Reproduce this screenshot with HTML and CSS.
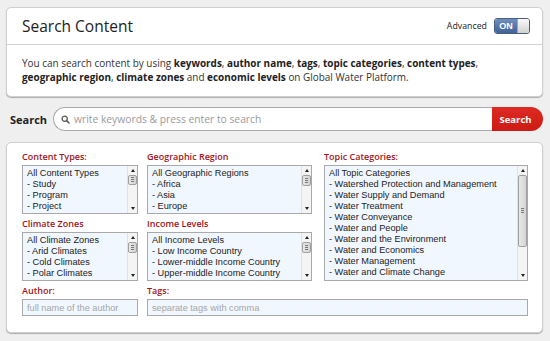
FILE: index.html
```html
<!DOCTYPE html>
<html>
<head>
<meta charset="utf-8">
<link rel="stylesheet" href="styles.css">
</head>
<body>
<div class="page">
  <section class="card intro">
    <header class="intro-head">
      <h1 class="title">Search Content</h1>
      <div class="adv">
        <span class="adv-label">Advanced</span>
        <span class="toggle"><span class="toggle-on">ON</span><span class="toggle-knob"></span></span>
      </div>
    </header>
    <p class="desc">You can search content by using <b>keywords</b>, <b>author name</b>, <b>tags</b>, <b>topic categories</b>, <b>content types</b>,<br><b>geographic region</b>, <b>climate zones</b> and <b>economic levels</b> on Global Water Platform.</p>
  </section>

  <div class="searchbar">
    <span class="search-label">Search</span>
    <div class="search-field">
      <svg class="search-icon" width="9" height="9" viewBox="0 0 9 9"><circle cx="3.7" cy="3.7" r="2.6" fill="none" stroke="#555" stroke-width="1.3"/><line x1="5.6" y1="5.6" x2="8" y2="8" stroke="#555" stroke-width="1.5" stroke-linecap="round"/></svg>
      <input class="search-input" type="text" placeholder="write keywords &amp; press enter to search">
    </div>
    <button class="search-btn">Search</button>
  </div>

  <section class="card filters">
    <div class="field f-types">
      <div class="flabel">Content Types:</div>
      <div class="list">
        <div class="items">
          <div>All Content Types</div><div>- Study</div><div>- Program</div><div>- Project</div>
        </div>
        <div class="sb"><span class="arr up"></span><span class="track"><span class="thumb thumb-s"></span></span><span class="arr down"></span></div>
      </div>
    </div>
    <div class="field f-geo">
      <div class="flabel">Geographic Region</div>
      <div class="list">
        <div class="items">
          <div>All Geographic Regions</div><div>- Africa</div><div>- Asia</div><div>- Europe</div>
        </div>
        <div class="sb"><span class="arr up"></span><span class="track"><span class="thumb thumb-m"></span></span><span class="arr down"></span></div>
      </div>
    </div>
    <div class="field f-topic">
      <div class="flabel">Topic Categories:</div>
      <div class="list list-tall">
        <div class="items">
          <div>All Topic Categories</div>
          <div>- Watershed Protection and Management</div>
          <div>- Water Supply and Demand</div>
          <div>- Water Treatment</div>
          <div>- Water Conveyance</div>
          <div>- Water and People</div>
          <div>- Water and the Environment</div>
          <div>- Water and Economics</div>
          <div>- Water Management</div>
          <div>- Water and Climate Change</div>
        </div>
        <div class="sb"><span class="arr up"></span><span class="track"><span class="thumb thumb-l"></span></span><span class="arr down"></span></div>
      </div>
    </div>
    <div class="field f-climate">
      <div class="flabel">Climate Zones</div>
      <div class="list">
        <div class="items">
          <div>All Climate Zones</div><div>- Arid Climates</div><div>- Cold Climates</div><div>- Polar Climates</div>
        </div>
        <div class="sb"><span class="arr up"></span><span class="track"><span class="thumb thumb-m"></span></span><span class="arr down"></span></div>
      </div>
    </div>
    <div class="field f-income">
      <div class="flabel">Income Levels</div>
      <div class="list">
        <div class="items">
          <div>All Income Levels</div><div>- Low Income Country</div><div>- Lower-middle Income Country</div><div>- Upper-middle Income Country</div>
        </div>
        <div class="sb"><span class="arr up"></span><span class="track"><span class="thumb thumb-m"></span></span><span class="arr down"></span></div>
      </div>
    </div>
    <div class="field f-author">
      <div class="flabel">Author:</div>
      <input class="tinput" type="text" placeholder="full name of the author">
    </div>
    <div class="field f-tags">
      <div class="flabel">Tags:</div>
      <input class="tinput" type="text" placeholder="separate tags with comma">
    </div>
  </section>
</div>
</body>
</html>
```

FILE: styles.css
```css
* { box-sizing: border-box; }
html, body { margin: 0; padding: 0; }
body {
  background: #efefef;
  font-family: "Open Sans", "DejaVu Sans", sans-serif;
  color: #333;
  width: 550px;
  height: 341px;
  overflow: hidden;
}
.page {
  padding: 7px 7px 0 6px;
}
.card {
  background: #fff;
  border: 1px solid #cfcfcf;
  border-radius: 5px;
  box-shadow: 0 1px 1px rgba(0,0,0,0.28);
}
.intro-head {
  height: 37px;
  border-bottom: 1px solid #d2d2d2;
  display: flex;
  align-items: center;
  justify-content: space-between;
  padding: 0 12px 0 15px;
}
.title {
  margin: 0;
  font-size: 15.5px;
  font-weight: 400;
  color: #222;
}
.adv {
  display: flex;
  align-items: center;
  gap: 7px;
}
.adv-label {
  font-size: 8.8px;
  color: #222;
}
.toggle {
  display: flex;
  width: 36px;
  height: 16px;
  border: 1px solid #4a5f80;
  border-radius: 3px;
  overflow: hidden;
}
.toggle-on {
  flex: 1;
  background: linear-gradient(#6f8fc0, #3f6298);
  color: #fff;
  font-size: 9px;
  font-weight: 700;
  line-height: 14px;
  text-align: center;
  font-family: "Liberation Sans", Arial, sans-serif;
}
.toggle-knob {
  width: 12px;
  background: linear-gradient(#fafafa, #d0d0d0);
  border-left: 1px solid #9aa;
}
.desc {
  margin: 0;
  padding: 11px 15px 12px;
  font-size: 9.95px;
  line-height: 14px;
  color: #333;
}
.desc b { color: #222; font-weight: 700; }

.searchbar {
  display: flex;
  align-items: center;
  margin: 10px 0 11px 4px;
  height: 24px;
}
.search-label {
  font-size: 11px;
  font-weight: 700;
  color: #222;
  width: 43px;
}
.search-field {
  flex: 1;
  height: 24px;
  display: flex;
  align-items: center;
  border: 1px solid #aaa;
  border-right: none;
  border-radius: 12px 0 0 12px;
  background: #fff;
  padding-left: 7px;
}
.search-icon { flex: none; margin-right: 4px; }
.search-input {
  flex: 1;
  border: none;
  outline: none;
  background: transparent;
  font-family: "Open Sans", "DejaVu Sans", sans-serif;
  font-size: 10.3px;
  padding: 0;
  color: #333;
}
.search-input::placeholder { color: #9a9a9a; }
.search-btn {
  width: 51px;
  height: 24px;
  border: none;
  border-radius: 0 12px 12px 0;
  background: linear-gradient(#dd2a22, #cc1b14);
  color: #fff;
  font-family: "Open Sans", "DejaVu Sans", sans-serif;
  font-size: 9.5px;
  font-weight: 700;
  padding: 0 4px 0 0;
}

.filters {
  height: 191px;
  padding: 7px 14px 0 15px;
  display: grid;
  grid-template-columns: 116px 165px 207px;
  grid-template-rows: auto auto auto;
  column-gap: 9px;
  row-gap: 3px;
  align-content: start;
}
.field { display: flex; flex-direction: column; }
.f-types { grid-column: 1; grid-row: 1; }
.f-geo { grid-column: 2; grid-row: 1; }
.f-topic { grid-column: 3; grid-row: 1 / span 2; margin-left: 3px; }
.f-climate { grid-column: 1; grid-row: 2; }
.f-income { grid-column: 2; grid-row: 2; }
.f-author { grid-column: 1; grid-row: 3; }
.f-tags { grid-column: 2 / span 2; grid-row: 3; }

.flabel {
  font-size: 9px;
  line-height: 14px;
  height: 14px;
  margin-bottom: 1px;
  color: #a3151a;
  font-weight: 600;
}
.list {
  height: 49px;
  display: flex;
  border: 1px solid #a9a9a9;
  background: #f1f7fe;
  overflow: hidden;
}
.list-tall { flex: 1; height: auto; }
.items {
  flex: 1;
  padding: 2px 4px;
  font-family: "Liberation Sans", Arial, sans-serif;
  font-size: 9.2px;
  line-height: 11px;
  color: #222;
  white-space: nowrap;
  overflow: hidden;
}
.sb {
  width: 10px;
  display: flex;
  flex-direction: column;
  background: #f4f4f4;
  border-left: 1px solid #e2e2e2;
}
.arr {
  height: 9px;
  position: relative;
  flex: none;
}
.arr::after {
  content: "";
  position: absolute;
  left: 3px;
  width: 0; height: 0;
  border-left: 2px solid transparent;
  border-right: 2px solid transparent;
}
.arr.up::after { top: 3px; border-bottom: 3px solid #222; }
.arr.down::after { bottom: 3px; border-top: 3px solid #222; }
.track { flex: 1; display: block; }
.thumb {
  display: block;
  border: 1px solid #a0a0a0;
  border-radius: 2px;
  background: linear-gradient(90deg, #e8e8e8, #d4d4d4);
  position: relative;
}
.thumb::after {
  content: "";
  position: absolute;
  left: 2px; right: 2px;
  top: 50%;
  height: 5px;
  margin-top: -3px;
  background: repeating-linear-gradient(#777 0 1px, transparent 1px 2px);
}
.thumb-s { height: 10px; }
.thumb-m { height: 11px; }
.thumb-l { height: 72px; }

.tinput {
  height: 17px;
  border: 1px solid #a9a9a9;
  background: #f1f7fe;
  padding: 0 4px;
  font-family: "Liberation Sans", Arial, sans-serif;
  font-size: 9.2px;
  outline: none;
}
.tinput::placeholder { color: #a6a6a6; }
```
